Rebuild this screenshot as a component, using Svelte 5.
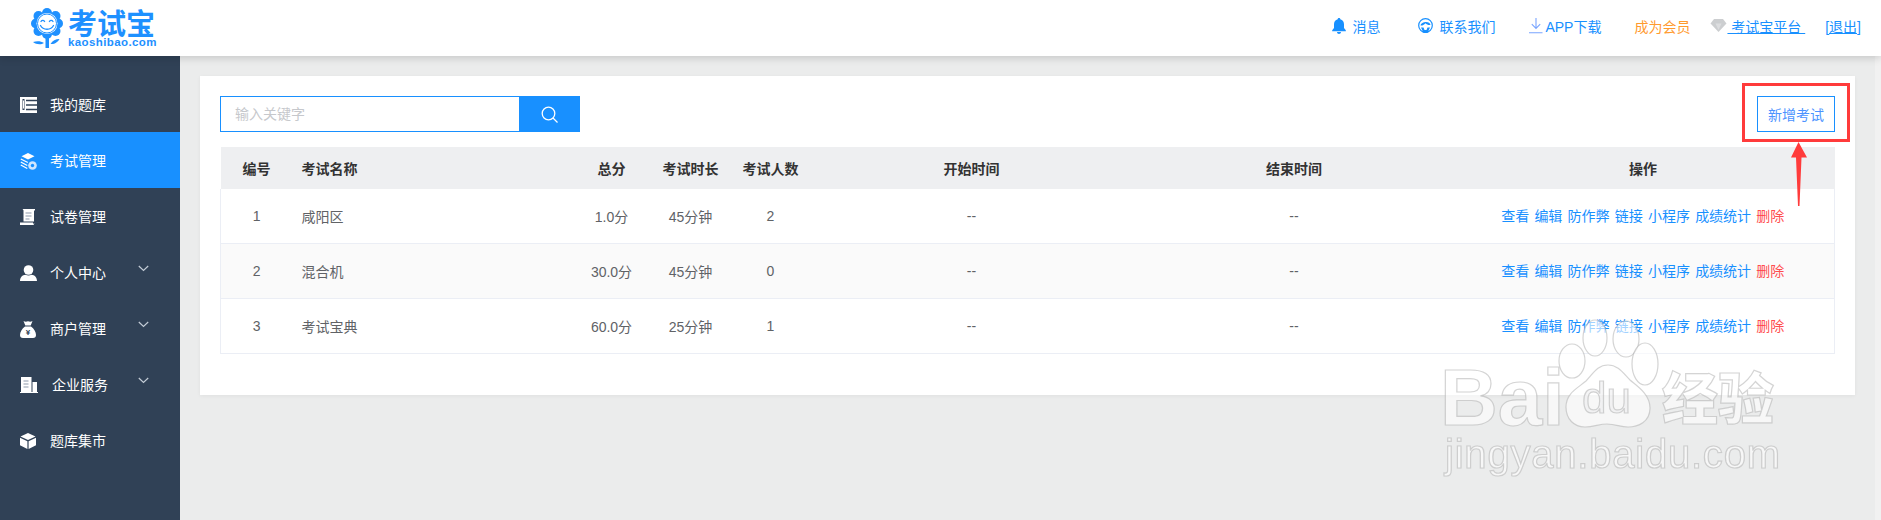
<script>
  const rows = [
    { id: 1, name: '咸阳区', score: '1.0分', time: '45分钟', people: 2 },
    { id: 2, name: '混合机', score: '30.0分', time: '45分钟', people: 0 },
    { id: 3, name: '考试宝典', score: '60.0分', time: '25分钟', people: 1 }
  ];
  const actions = ['查看', '编辑', '防作弊', '链接', '小程序', '成绩统计'];
  const nav = [
    { label: '我的题库', icon: 'bank' },
    { label: '考试管理', icon: 'exam', active: true },
    { label: '试卷管理', icon: 'paper' },
    { label: '个人中心', icon: 'user', arrow: true },
    { label: '商户管理', icon: 'bag', arrow: true },
    { label: '企业服务', icon: 'corp', arrow: true, wide: true },
    { label: '题库集市', icon: 'box' }
  ];
</script>

<div class="page">
  <header class="top">
    <div class="logo">
      <svg class="flower" width="32" height="40" viewBox="0 0 32 40">
        <g fill="#1e90ff">
          <circle cx="16" cy="5" r="5"/><circle cx="24.500" cy="8" r="5"/><circle cx="27" cy="15.500" r="5"/>
          <circle cx="24.500" cy="23" r="5"/><circle cx="16" cy="26" r="5"/><circle cx="7.500" cy="23" r="5"/>
          <circle cx="5" cy="15.500" r="5"/><circle cx="7.500" cy="8" r="5"/>
          <rect x="14.500" y="28" width="3.500" height="12"/>
          <path d="M13 35c-3-2-7-2.500-11-1 3 2.500 8 3 11 1zM19.500 36c2-3.500 5-5 9-5-1.500 3-5 5.500-9 5z"/>
        </g>
        <circle cx="16" cy="15.500" r="10.500" fill="#fff"/>
        <circle cx="16" cy="15.500" r="9.500" fill="none" stroke="#1e90ff" stroke-width="1"/>
        <g fill="none" stroke="#1e90ff" stroke-width="1.300" stroke-linecap="round">
          <path d="M10 13.500c.9-1.500 2.700-1.500 3.600 0M18.400 13.500c.9-1.500 2.700-1.500 3.600 0"/>
          <path d="M9.500 17.500c2.500 5 10.500 5 13 0"/>
        </g>
      </svg>
      <div class="brand">
        <span class="brand-cn">考试宝</span>
        <span class="brand-en">kaoshibao.com</span>
      </div>
    </div>

    <nav class="tools">
      <span class="tool t-msg">
        <svg width="14" height="16" viewBox="0 0 14 16"><path fill="#1890ff" d="M7 0c.8 0 1.300.5 1.300 1.200C10.600 1.800 12 3.800 12 6.200V10l1.800 2.300v.9H.2v-.9L2 10V6.200c0-2.400 1.400-4.400 3.700-5C5.700.5 6.200 0 7 0zM5 14h4c0 1.100-.9 2-2 2s-2-.9-2-2z"/></svg>
        消息
      </span>
      <span class="tool t-contact">
        <svg width="15" height="16" viewBox="0 0 15 16"><circle cx="7.500" cy="7.500" r="6.800" fill="none" stroke="#1890ff" stroke-width="1.200"/><path fill="#1890ff" d="M2.500 7.500C3 3.500 12 2.500 12.500 7c-2 .3-4-.6-5-1.800-.7 1.300-3 2.500-5 2.300zM3 9.500h2.500l1 2.500h2l1-2.500H12L9.500 15h-4z"/></svg>
        联系我们
      </span>
      <span class="tool t-app">
        <svg width="14" height="16" viewBox="0 0 14 16"><path fill="none" stroke="#7aa5ff" stroke-width="1.100" d="M7 0v10M2.800 6.200 7 10.400l4.200-4.200M0 14.800h13.500"/></svg>
        APP下载
      </span>
      <span class="tool vip">成为会员</span>
      <span class="tool t-plat">
        <svg width="17" height="13" viewBox="0 0 16 13"><path fill="#ccced0" d="M3.500 0h9L16 4.500 8 13 0 4.500z"/><path fill="#dcdddf" d="M5 4.500h6L8 11z"/></svg>
        <a class="under">&nbsp;考试宝平台&nbsp;</a>
      </span>
      <a class="tool under quit">[退出]</a>
    </nav>
  </header>

  <div class="body">
    <aside class="side">
      {#each nav as n}
        <div class="item" class:active={n.active}>
          <span class="icon">
            {#if n.icon === 'bank'}
              <svg width="17" height="16" viewBox="0 0 17 16"><path fill="#fff" d="M0 0h17v16H0z"/><path stroke="#304156" stroke-width="1.300" fill="none" d="M6 3.500h11M6 8h11M6 12.500h11"/><rect x="2.500" y="2" width="2" height="11" fill="#304156"/><rect x="3" y="3.500" width="1" height="8" fill="#fff"/></svg>
            {:else if n.icon === 'exam'}
              <svg width="17" height="17" viewBox="0 0 17 17"><path fill="#fff" d="M8 0l6.500 3.300L8 6.600 1.500 3.300z"/><path fill="none" stroke="#fff" stroke-width="1.300" d="M.8 6l7 3.500M.8 9l6.500 3.500M.8 12l6.500 3.500"/><circle cx="12.500" cy="12.500" r="4.300" fill="#cfe6ff"/><circle cx="12.500" cy="12.500" r="1.700" fill="#1890ff"/></svg>
            {:else if n.icon === 'paper'}
              <svg width="16" height="16" viewBox="0 0 16 16"><path fill="#fff" d="M2.500 0H15v1.600h-1V12.500H3.500V1.500C3.500.9 3 .5 2.500 0zM0 13.500h13v1.200l1.500-.4-1 1.700H0z"/><path stroke="#8d99ab" stroke-width="1" d="M5.500 4h6M5.500 7h6M5.500 10h4"/></svg>
            {:else if n.icon === 'user'}
              <svg width="17" height="16" viewBox="0 0 17 16"><circle cx="8.500" cy="5" r="4.800" fill="#fff"/><path fill="#fff" d="M0 16c0-4 2.500-6 5.500-6.300 1.800 1 4.200 1 6 0C14.500 10 17 12 17 16z"/></svg>
            {:else if n.icon === 'bag'}
              <svg width="16" height="17" viewBox="0 0 16 17"><path fill="#fff" d="M3.500 0c1.500.8 3 .8 4.500.2C9.500.8 11 .8 12.500 0l-1.800 4.500H5.300zM5 5.500h6C14 7.500 16 11 16 14c0 2-1 3-3 3H3c-2 0-3-1-3-3 0-3 2-6.500 5-8.500z"/><text x="8" y="14" font-size="8" text-anchor="middle" fill="#304156" font-family="Liberation Sans" font-weight="700">¥</text></svg>
            {:else if n.icon === 'corp'}
              <svg width="18" height="16" viewBox="0 0 18 16"><path fill="#fff" d="M1 0h10.500v15H1zM12.500 5H17v10h-4.500zM0 15h18v1H0z"/><path stroke="#8d99ab" stroke-width="1" d="M3.500 4h5M3.500 7h5M3.500 10h5"/></svg>
            {:else}
              <svg width="16" height="16" viewBox="0 0 16 16"><path fill="#fff" d="M8 0l7.500 3.500L8 7 .5 3.500z"/><path fill="#fff" d="M0 4.700l7.400 3.500V16L0 12.300zM16 4.700 8.600 8.200V16l7.400-3.700z"/></svg>
            {/if}
          </span>
          <span class="label" class:wide={n.wide}>{n.label}</span>
          {#if n.arrow}
            <svg class="chev" width="11" height="7" viewBox="0 0 11 7"><path fill="none" stroke="#c3ccd6" stroke-width="1.200" d="M.8 1l4.700 4.500L10.200 1"/></svg>
          {/if}
        </div>
      {/each}
    </aside>

    <main class="main">
      <section class="card">
        <div class="bar">
          <div class="search">
            <input placeholder="输入关键字" />
            <button class="go" aria-label="搜索">
              <svg width="17" height="17" viewBox="0 0 17 17"><circle cx="7.500" cy="7.500" r="6.300" fill="none" stroke="#fff" stroke-width="1.300"/><path stroke="#fff" stroke-width="1.300" d="M12 12l4.500 4.500"/></svg>
            </button>
          </div>
          <button class="add">新增考试</button>
        </div>

        <table>
          <colgroup>
            <col class="c1"/><col class="c2"/><col class="c3"/><col class="c4"/>
            <col class="c5"/><col class="c6"/><col class="c7"/><col/>
          </colgroup>
          <thead>
            <tr>
              <th>编号</th><th class="left">考试名称</th><th>总分</th><th>考试时长</th><th>考试人数</th><th>开始时间</th><th>结束时间</th><th>操作</th>
            </tr>
          </thead>
          <tbody>
            {#each rows as r}
              <tr>
                <td>{r.id}</td>
                <td class="left">{r.name}</td>
                <td>{r.score}</td>
                <td>{r.time}</td>
                <td>{r.people}</td>
                <td>--</td>
                <td>--</td>
                <td>
                  <div class="ops">
                    {#each actions as a}<a>{a}</a>{/each}
                    <a class="del">删除</a>
                  </div>
                </td>
              </tr>
            {/each}
          </tbody>
        </table>
      </section>
    </main>
    <div class="rail"></div>
  </div>

  <!-- red annotation drawn over the screenshot -->
  <svg class="over" width="1881" height="520" viewBox="0 0 1881 520">
    <rect x="1743.500" y="84.500" width="105" height="56" fill="none" stroke="#ff3b3b" stroke-width="3"/>
    <path fill="#ff3b3b" d="M1798.500 142l8.500 15.500h-5.500L1799.500 206h-1.500L1796 157.500h-5z"/>
  </svg>

  <!-- Baidu watermark -->
  <svg class="over mark" width="1881" height="520" viewBox="0 0 1881 520">
    <g class="wm">
      <text x="1440" y="425" font-size="80" font-weight="700" font-family="Liberation Sans, sans-serif">Bai</text>
      <g class="paw">
        <ellipse cx="1572" cy="361" rx="13" ry="17"/>
        <ellipse cx="1595" cy="338" rx="12" ry="18"/>
        <ellipse cx="1626" cy="339" rx="13" ry="18"/>
        <ellipse cx="1645" cy="364" rx="13" ry="21"/>
        <path d="M1608 365c10 0 15 8 22 15 7 6 20 14 20 28 0 14-12 19-22 19-8 0-12-3-21-3-8 0-13 3-22 3-11 0-19-8-19-20 0-14 12-19 20-26 7-7 11-16 22-16z"/>
      </g>
      <text class="du" x="1582" y="413" font-size="44" font-family="Liberation Sans, sans-serif">du</text>
      <text x="1662" y="419" font-size="56" font-weight="900" font-family="Noto Sans CJK SC, sans-serif">经验</text>
      <text x="1445" y="468" font-size="40" font-family="Liberation Sans, sans-serif" textLength="335">jingyan.baidu.com</text>
    </g>
  </svg>
</div>

<style>
  :global(body) { margin: 0; font-family: "Liberation Sans", "Noto Sans CJK SC", sans-serif; }
  .page { position: relative; width: 1881px; height: 520px; overflow: hidden; display: flex; flex-direction: column; background: #ebecec; font-size: 14px; }

  .top { height: 56px; flex: none; background: #fff; display: flex; align-items: center; justify-content: space-between; padding: 0 20px 0 31px; box-shadow: 0 2px 8px rgba(0,0,0,.16); position: relative; z-index: 2; }
  .logo { display: flex; align-items: center; gap: 5px; }
  .brand { display: flex; flex-direction: column; }
  .brand-cn { color: #1e90ff; font-size: 29px; font-weight: 700; line-height: 28px; font-family: "Noto Sans CJK SC", sans-serif; }
  .brand-en { color: #1e90ff; font-size: 11.500px; font-weight: 700; line-height: 13px; letter-spacing: .4px; }

  .tools { display: flex; align-items: center; font-size: 14px; color: #1890ff; margin-top: -5px; }
  .tool { display: flex; align-items: center; white-space: nowrap; }
  .tool svg { margin-right: 6px; }
  .t-msg { margin-right: 38px; }
  .t-contact { margin-right: 34px; }
  .t-app { margin-right: 33px; }
  .t-app svg { margin-right: 2px; }
  .vip { color: #ff9a2e; margin-right: 20px; }
  .t-plat svg { margin-right: 0; }
  .t-plat { margin-right: 20px; }
  .under { text-decoration: underline; }

  .body { flex: 1; display: flex; min-height: 0; }
  .side { width: 180px; flex: none; background: #304156; padding-top: 20px; box-sizing: border-box; }
  .item { height: 56px; box-sizing: border-box; display: flex; align-items: center; padding: 2px 31px 0 20px; color: #fff; }
  .item.active { background: #1890ff; }
  .icon { width: 30px; display: flex; align-items: center; flex: none; }
  .label { line-height: 20px; }
  .label.wide { margin-left: 2px; }
  .chev { margin-left: auto; margin-top: -9px; }

  .main { flex: 1; padding: 20px; min-width: 0; }
  .card { background: #fff; padding: 20px 20px 41px; box-shadow: 0 1px 4px rgba(0,0,0,.05); }
  .bar { display: flex; justify-content: space-between; margin-bottom: 15px; }
  .search { width: 360px; height: 36px; display: flex; box-sizing: border-box; }
  .search input { flex: 1; min-width: 0; box-sizing: border-box; border: 1px solid #1890ff; border-right: 0; padding: 0 14px; font: inherit; font-size: 14px; outline: none; }
  .search input::placeholder { color: #c6c8cc; }
  .go { width: 61px; flex: none; border: 0; background: #1890ff; display: flex; align-items: center; justify-content: center; padding: 0; }
  .add { width: 78px; height: 36px; box-sizing: border-box; border: 1px solid #1890ff; background: #fff; color: #4b93ff; font: inherit; font-size: 14px; padding: 0; }
  .rail { width: 6px; flex: none; background: #f1f1f1; }

  table { width: 100%; border-collapse: collapse; table-layout: fixed; }
  .c1 { width: 72px; } .c2 { width: 284px; } .c3 { width: 70px; } .c4 { width: 88px; }
  .c5 { width: 72px; } .c6 { width: 330px; } .c7 { width: 315px; }
  th { height: 42px; padding: 0; background: #eeeff1; color: #333; font-size: 14px; font-weight: 700; text-align: center; }
  td { height: 54px; padding: 0; color: #606266; font-size: 14px; text-align: center; border-top: 1px solid #ebeef5; }
  tbody tr:first-child td { border-top: 0; }
  tbody tr:nth-child(2) td { background: #fafafa; }
  tbody tr:last-child td { border-bottom: 1px solid #ebeef5; }
  td:first-child { border-left: 1px solid #ebeef5; }
  td:last-child { border-right: 1px solid #ebeef5; }
  .left { text-align: left; padding-left: 9px; }
  .ops { display: flex; justify-content: center; gap: 5.200px; margin-top: -2px; }
  .ops a { color: #1890ff; }
  .ops a.del { color: #ff4d4f; }

  .over { position: absolute; left: 0; top: 0; pointer-events: none; z-index: 3; }
  .mark { z-index: 4; }
  .wm { fill: rgba(255,255,255,.6); stroke: rgba(170,170,170,.5); stroke-width: 1.200; filter: blur(.7px); }
  .du { fill: rgba(235,236,237,.5); }
</style>
